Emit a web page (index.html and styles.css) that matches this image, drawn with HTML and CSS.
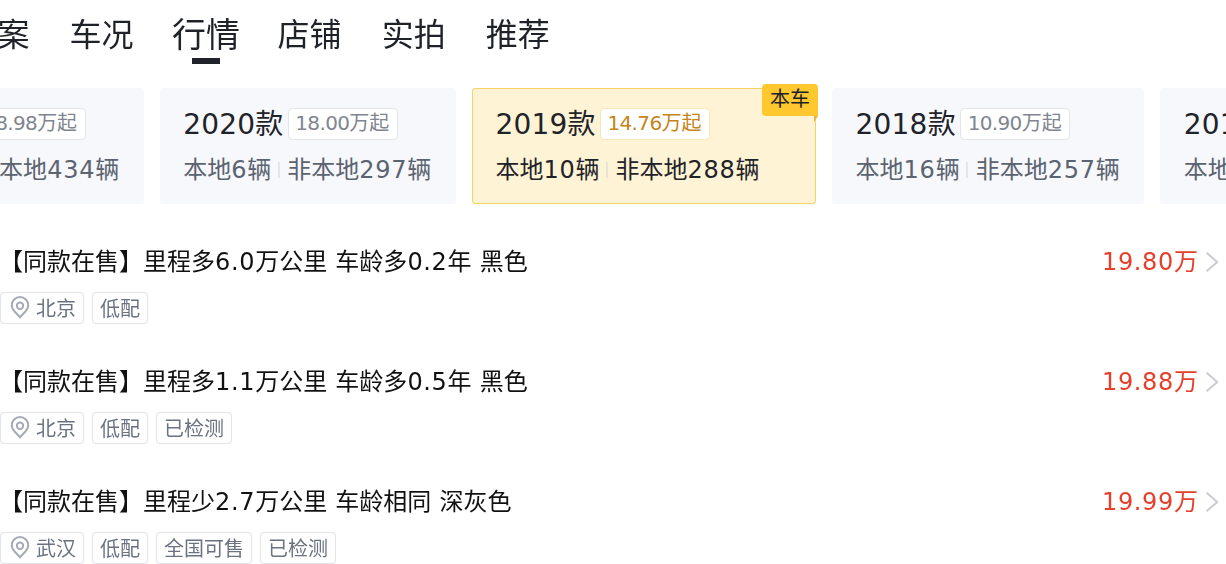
FILE: index.html
```html
<!DOCTYPE html>
<html lang="zh-CN">
<head>
<meta charset="utf-8">
<title>行情</title>
<link rel="stylesheet" href="styles.css">
</head>
<body>
<main class="page">
  <nav class="tabs">
    <a class="tab">档案</a>
    <a class="tab">车况</a>
    <a class="tab is-active"><span class="tab-label">行情</span></a>
    <a class="tab">店铺</a>
    <a class="tab">实拍</a>
    <a class="tab">推荐</a>
  </nav>
  <section class="years">
    <article class="year">
      <div class="year-head"><span class="year-name"><span class="n">2021</span>款</span><span class="year-price"><span class="n">18.98</span>万起</span></div>
      <div class="year-stats"><span>本地<span class="n">6</span>辆</span><i class="sep"></i><span>非本地<span class="n">434</span>辆</span></div>
    </article>
    <article class="year">
      <div class="year-head"><span class="year-name"><span class="n">2020</span>款</span><span class="year-price"><span class="n">18.00</span>万起</span></div>
      <div class="year-stats"><span>本地<span class="n">6</span>辆</span><i class="sep"></i><span>非本地<span class="n">297</span>辆</span></div>
    </article>
    <article class="year is-current">
      <span class="badge">本车</span>
      <div class="year-head"><span class="year-name"><span class="n">2019</span>款</span><span class="year-price"><span class="n">14.76</span>万起</span></div>
      <div class="year-stats"><span>本地<span class="n">10</span>辆</span><i class="sep"></i><span>非本地<span class="n">288</span>辆</span></div>
    </article>
    <article class="year">
      <div class="year-head"><span class="year-name"><span class="n">2018</span>款</span><span class="year-price"><span class="n">10.90</span>万起</span></div>
      <div class="year-stats"><span>本地<span class="n">16</span>辆</span><i class="sep"></i><span>非本地<span class="n">257</span>辆</span></div>
    </article>
    <article class="year">
      <div class="year-head"><span class="year-name"><span class="n">2017</span>款</span><span class="year-price"><span class="n">9.80</span>万起</span></div>
      <div class="year-stats"><span>本地<span class="n">8</span>辆</span><i class="sep"></i><span>非本地<span class="n">190</span>辆</span></div>
    </article>
  </section>
  <section class="list">
    <article class="row">
      <div class="row-main">
        <h3 class="row-title">【同款在售】里程多<span class="n">6.0</span>万公里 车龄多<span class="n">0.2</span>年 黑色</h3>
        <div class="chips">
          <span class="chip"><svg class="pin" viewBox="0 0 12 12"><path d="M6 10.6 3.2 7.6A4.1 4.1 0 1 1 8.8 7.6Z"/><circle cx="6" cy="4.9" r="1.6"/></svg>北京</span>
          <span class="chip">低配</span>
        </div>
      </div>
      <div class="row-price"><span><span class="n">19.80</span>万</span><svg class="chev" viewBox="0 0 14 10"><path d="M4.3.4 9.6 5 4.3 9.6"/></svg></div>
    </article>
    <article class="row">
      <div class="row-main">
        <h3 class="row-title">【同款在售】里程多<span class="n">1.1</span>万公里 车龄多<span class="n">0.5</span>年 黑色</h3>
        <div class="chips">
          <span class="chip"><svg class="pin" viewBox="0 0 12 12"><path d="M6 10.6 3.2 7.6A4.1 4.1 0 1 1 8.8 7.6Z"/><circle cx="6" cy="4.9" r="1.6"/></svg>北京</span>
          <span class="chip">低配</span>
          <span class="chip">已检测</span>
        </div>
      </div>
      <div class="row-price"><span><span class="n">19.88</span>万</span><svg class="chev" viewBox="0 0 14 10"><path d="M4.3.4 9.6 5 4.3 9.6"/></svg></div>
    </article>
    <article class="row">
      <div class="row-main">
        <h3 class="row-title">【同款在售】里程少<span class="n">2.7</span>万公里 车龄相同 深灰色</h3>
        <div class="chips">
          <span class="chip"><svg class="pin" viewBox="0 0 12 12"><path d="M6 10.6 3.2 7.6A4.1 4.1 0 1 1 8.8 7.6Z"/><circle cx="6" cy="4.9" r="1.6"/></svg>武汉</span>
          <span class="chip">低配</span>
          <span class="chip">全国可售</span>
          <span class="chip">已检测</span>
        </div>
      </div>
      <div class="row-price"><span><span class="n">19.99</span>万</span><svg class="chev" viewBox="0 0 14 10"><path d="M4.3.4 9.6 5 4.3 9.6"/></svg></div>
    </article>
  </section>
</main>
</body>
</html>
```

FILE: styles.css
```css
html, body {
  margin: 0;
  height: 100%;
  overflow: hidden;
  background: #fff;
}
/* Designed at 613x282 and shown at double density */
.page {
  width: 613px;
  height: 282px;
  overflow: hidden;
  transform: scale(2);
  transform-origin: 0 0;
  font-family: "DejaVu Sans", "Noto Sans CJK SC", sans-serif;
  color: #1f2329;
}
.tabs {
  display: flex;
  gap: 20px;
  margin-left: -17.25px;
  padding-top: 6.25px;
  height: 38px;
  box-sizing: border-box;
}
.tab {
  position: relative;
  font-size: 16px;
  line-height: 24px;
  height: 24px;
  white-space: nowrap;
}
.tab-label {
  display: block;
  transform: scale(1.0625);
  transform-origin: 50% 30%;
}
.tab.is-active::after {
  content: "";
  position: absolute;
  left: 9.25px;
  top: 22.25px;
  width: 14px;
  height: 3px;
  background: #1f2329;
}
.years {
  display: flex;
  gap: 8px;
  margin-top: 6px;
  margin-left: -76px;
  width: 800px;
}
.year {
  position: relative;
  flex: none;
  box-sizing: border-box;
  height: 58px;
  padding: 8px 12px 0;
  border-radius: 2px;
  background: #f6f8fc;
  color: #5c6370;
}
.year.is-current {
  padding-right: 28px;
  background: #fff3d5;
  box-shadow: inset 0 0 0 .5px #f6d365;
  color: #1f2329;
}
.year-head {
  display: flex;
  align-items: center;
  height: 20px;
  margin: 0 .5px 0 -.5px;
}
.year-name {
  font-size: 14px;
  line-height: 20px;
  color: #1f2329;
  white-space: nowrap;
}
.year-name .n {
  letter-spacing: .1px;
}
.year-price {
  margin-left: 2.5px;
  padding: 0 4.5px 0 3.5px;
  height: 16px;
  line-height: 16px;
  font-size: 10px;
  border-radius: 2px;
  background: #fff;
  box-shadow: inset 0 0 0 .5px #e3e5ea;
  color: #80858f;
  white-space: nowrap;
}
.year-price .n {
  letter-spacing: -.32px;
}
.is-current .year-price {
  box-shadow: inset 0 0 0 .5px #f7e6b8;
  color: #c4851a;
}
.year-stats {
  display: flex;
  align-items: center;
  margin: 3px .5px 0 -.5px;
  font-size: 12px;
  line-height: 20px;
  white-space: nowrap;
}
.year-stats .n {
  letter-spacing: .37px;
}
.sep {
  flex: none;
  width: 1px;
  height: 8px;
  margin: 0 3.5px;
  background: #cfd3d9;
  transform: scaleX(.5);
}
.badge {
  position: absolute;
  top: -2px;
  right: -.5px;
  width: 27.5px;
  height: 16px;
  line-height: 16px;
  text-align: center;
  font-size: 10px;
  border-radius: 2px 2px 0 2px;
  background: #ffc82e;
  color: #1f2329;
}
.badge::after {
  content: "";
  position: absolute;
  right: 0;
  top: 16px;
  border-top: 3px solid #e8b34a;
  border-right: 2px solid transparent;
}
.list {
  margin-top: 19px;
}
.row {
  display: flex;
  justify-content: space-between;
  height: 60px;
}
.row-title {
  margin: 0 0 0 -.5px;
  font-size: 12px;
  font-weight: 400;
  line-height: 20px;
  word-spacing: .3px;
  color: #111;
  white-space: nowrap;
}
.row-title .n,
.row-price .n {
  letter-spacing: .32px;
}
.chips {
  display: flex;
  gap: 4px;
  margin-top: 5px;
}
.chip {
  display: flex;
  align-items: center;
  box-sizing: border-box;
  height: 16px;
  padding: 1px 4.25px 0 3.75px;
  font-size: 10px;
  line-height: 16px;
  border-radius: 2px;
  box-shadow: inset 0 0 0 .5px #e3e5ea;
  color: #6b7280;
}
.pin {
  width: 12px;
  height: 12px;
  margin: -1px 2px 0 .25px;
  fill: none;
  stroke: #a6abb5;
  stroke-width: 1;
}
.row-price {
  display: flex;
  align-items: center;
  height: 20px;
  line-height: 20px;
  font-size: 12px;
  color: #e5402b;
}
.chev {
  width: 14px;
  height: 10px;
  fill: none;
  stroke: #c9ccd2;
  stroke-width: 1;
}
```
